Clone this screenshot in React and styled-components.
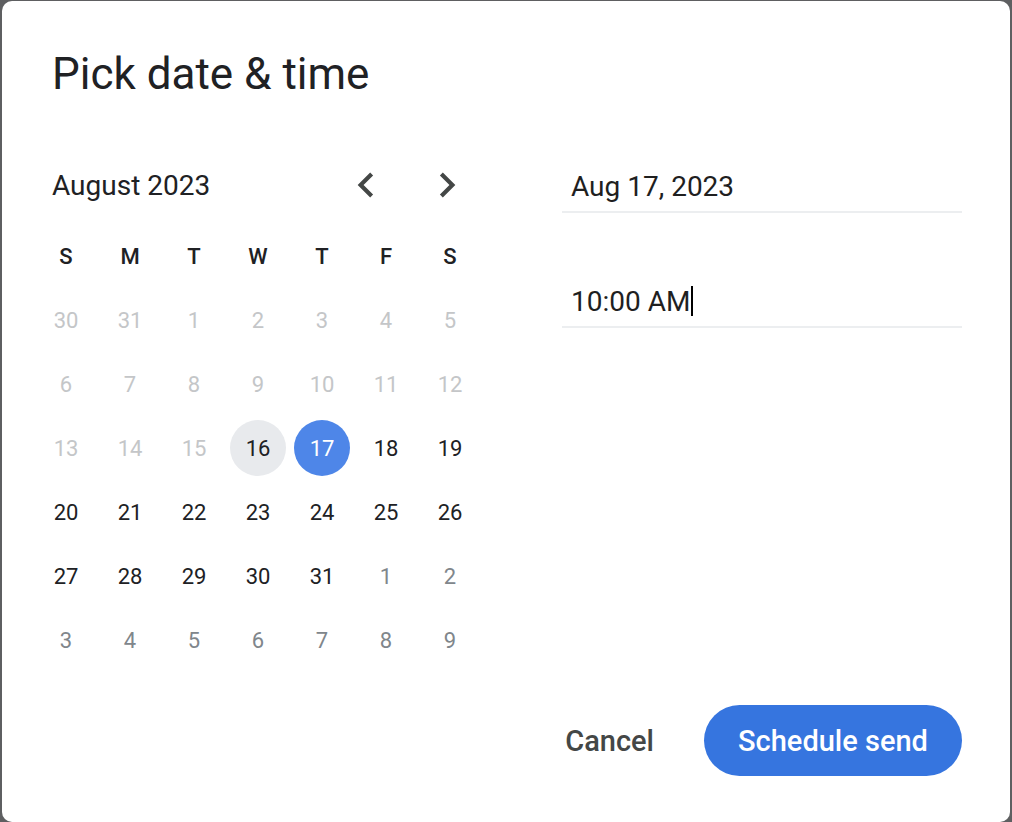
import styled, {createGlobalStyle} from 'styled-components';

const GlobalStyle = createGlobalStyle`
    html, body {
        margin: 0;
        padding: 0;
        background: #5e5f61;
    }

    body {
        font-family: Roboto, "Noto Sans", "Liberation Sans", sans-serif;
        color: #202124;
    }
`

const Dialog = styled.div`
    box-sizing: border-box;
    display: flex;
    flex-direction: column;
    height: 821px;
    margin: 1px 2px 0;
    padding: 47px 48px 46px 50px;
    border-radius: 10px;
    background: #fff;
`

const Title = styled.h1`
    margin: 0;
    font-size: 44px;
    line-height: 52px;
    font-weight: 400;
    color: #202124;
`

const Body = styled.div`
    display: flex;
    align-items: flex-start;
    margin-top: 61px;
`

const Calendar = styled.div`
    width: 430px;
`

const MonthRow = styled.div`
    display: flex;
    align-items: center;
    height: 48px;
`

const MonthLabel = styled.div`
    flex: 1;
    font-size: 28px;
    color: #202124;
`

const NavGroup = styled.div`
    display: flex;
    gap: 31px;
    margin-right: 10px;
`

const NavButton = styled.button`
    display: flex;
    align-items: center;
    justify-content: center;
    width: 50px;
    height: 50px;
    padding: 0;
    border: 0;
    background: none;
    color: #444746;
    cursor: pointer;
`

const Grid = styled.div`
    display: grid;
    grid-template-columns: repeat(7, 64px);
    grid-auto-rows: 64px;
    margin: 15px 0 0 -18px;
`

const WeekDay = styled.div`
    display: flex;
    align-items: center;
    justify-content: center;
    font-size: 22px;
    font-weight: 500;
    color: #202124;
`

const dayColors = {
    past: '#c4c6c8',
    next: '#80868b',
    normal: '#202124',
    today: '#202124',
    selected: '#fff',
}

const DayCell = styled.div`
    display: flex;
    align-items: center;
    justify-content: center;
`

const Day = styled.div`
    display: flex;
    align-items: center;
    justify-content: center;
    width: 56px;
    height: 56px;
    border-radius: 50%;
    font-size: 22px;
    color: ${p => dayColors[p.$kind]};
    background: ${p => p.$kind === 'today' ? '#e8eaed' : p.$kind === 'selected' ? '#4e86e8' : 'transparent'};
`

const Fields = styled.div`
    display: flex;
    flex-direction: column;
    gap: 63px;
    width: 400px;
    margin-left: 80px;
`

const Field = styled.div`
    display: flex;
    align-items: center;
    height: 50px;
    padding-left: 9px;
    border-bottom: 2px solid #eceef0;
    font-size: 28px;
    color: #1f1f1f;
`

const Caret = styled.span`
    display: inline-block;
    width: 2px;
    height: 30px;
    margin-left: 1px;
    background: #000;
`

const Footer = styled.div`
    display: flex;
    justify-content: flex-end;
    align-items: center;
    margin-top: auto;
`

const TextButton = styled.button`
    height: 71px;
    padding: 0 24px;
    margin-right: 26px;
    border: 0;
    background: none;
    font-family: inherit;
    font-size: 29px;
    font-weight: 500;
    color: #444746;
    cursor: pointer;
`

const PrimaryButton = styled.button`
    width: 258px;
    height: 71px;
    border: 0;
    border-radius: 36px;
    background: #3675df;
    font-family: inherit;
    font-size: 29px;
    font-weight: 500;
    color: #fff;
    cursor: pointer;
`

function Chevron({dir}) {
    const d = dir === 'left'
        ? 'M15.41 7.41L14 6l-6 6 6 6 1.41-1.41L10.83 12z'
        : 'M8.59 16.59L10 18l6-6-6-6-1.41 1.41L13.17 12z';
    return (
        <svg width="50" height="50" viewBox="0 0 24 24" fill="currentColor">
            <path d={d}/>
        </svg>
    )
}

const weekDays = ['S', 'M', 'T', 'W', 'T', 'F', 'S'];

const days = [
    [30, 'past'], [31, 'past'], [1, 'past'], [2, 'past'], [3, 'past'], [4, 'past'], [5, 'past'],
    [6, 'past'], [7, 'past'], [8, 'past'], [9, 'past'], [10, 'past'], [11, 'past'], [12, 'past'],
    [13, 'past'], [14, 'past'], [15, 'past'], [16, 'today'], [17, 'selected'], [18, 'normal'], [19, 'normal'],
    [20, 'normal'], [21, 'normal'], [22, 'normal'], [23, 'normal'], [24, 'normal'], [25, 'normal'], [26, 'normal'],
    [27, 'normal'], [28, 'normal'], [29, 'normal'], [30, 'normal'], [31, 'normal'], [1, 'next'], [2, 'next'],
    [3, 'next'], [4, 'next'], [5, 'next'], [6, 'next'], [7, 'next'], [8, 'next'], [9, 'next'],
];

export default function App() {
    return (
        <>
            <GlobalStyle/>
            <Dialog>
                <Title>Pick date &amp; time</Title>
                <Body>
                    <Calendar>
                        <MonthRow>
                            <MonthLabel>August 2023</MonthLabel>
                            <NavGroup>
                                <NavButton><Chevron dir="left"/></NavButton>
                                <NavButton><Chevron dir="right"/></NavButton>
                            </NavGroup>
                        </MonthRow>
                        <Grid>
                            {weekDays.map((d, i) => <WeekDay key={i}>{d}</WeekDay>)}
                            {days.map(([n, kind], i) => (
                                <DayCell key={i}>
                                    <Day $kind={kind}>{n}</Day>
                                </DayCell>
                            ))}
                        </Grid>
                    </Calendar>
                    <Fields>
                        <Field>Aug 17, 2023</Field>
                        <Field>10:00 AM<Caret/></Field>
                    </Fields>
                </Body>
                <Footer>
                    <TextButton>Cancel</TextButton>
                    <PrimaryButton>Schedule send</PrimaryButton>
                </Footer>
            </Dialog>
        </>
    )
}
